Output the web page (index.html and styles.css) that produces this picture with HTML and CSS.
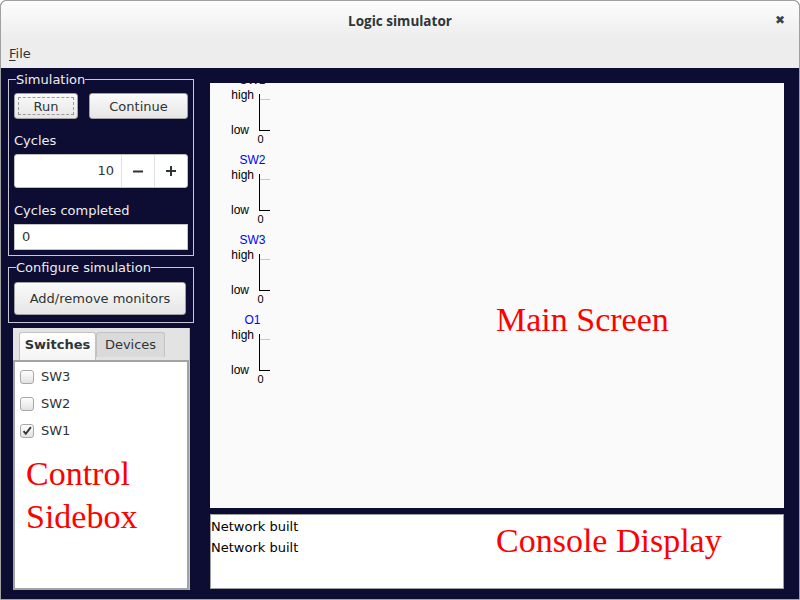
FILE: index.html
```html
<!DOCTYPE html>
<html>
<head>
<meta charset="utf-8">
<title>Logic simulator</title>
<link rel="stylesheet" href="styles.css">
</head>
<body>
<div class="window">
  <header class="head">
    <div class="titlebar">
      <span class="title">Logic simulator</span>
      <span class="close">✖</span>
    </div>
    <div class="menubar"><span class="menu"><u>F</u>ile</span></div>
  </header>
  <main class="body">
    <aside class="side">
      <fieldset class="frame frame-sim">
        <legend>Simulation</legend>
        <div class="btnrow">
          <button class="btn btn-run"><span class="focus">Run</span></button>
          <button class="btn btn-cont">Continue</button>
        </div>
        <div class="lbl">Cycles</div>
        <div class="spin">
          <span class="spin-val">10</span>
          <span class="spin-btn">
            <svg width="12" height="12" viewBox="0 0 12 12"><path d="M1 6.5h10" stroke="#2e3436" stroke-width="2"/></svg>
          </span>
          <span class="spin-btn">
            <svg width="12" height="12" viewBox="0 0 12 12"><path d="M1 6h10M6 1v10" stroke="#2e3436" stroke-width="2"/></svg>
          </span>
        </div>
        <div class="lbl lbl-2">Cycles completed</div>
        <div class="entry">0</div>
      </fieldset>
      <fieldset class="frame frame-cfg">
        <legend>Configure simulation</legend>
        <button class="btn btn-wide">Add/remove monitors</button>
      </fieldset>
      <div class="notebook">
        <div class="tabs">
          <span class="tab tab-active">Switches</span>
          <span class="tab">Devices</span>
        </div>
        <div class="page">
          <label class="check"><span class="box"></span>SW3</label>
          <label class="check"><span class="box"></span>SW2</label>
          <label class="check"><span class="box on"><svg width="14" height="14" viewBox="0 0 14 14"><path d="M3 7.2l2.6 3L11.5 2.5" fill="none" stroke="#2e3436" stroke-width="2.2"/></svg></span>SW1</label>
          <div class="note note-side">Control<br>Sidebox</div>
        </div>
      </div>
    </aside>
    <section class="right">
      <div class="canvas">
        <svg class="plot" width="574" height="425" viewBox="0 0 574 425">
          <g class="trace">
            <text class="name" x="42.5" y="1">SW1</text>
            <text class="axis-t" x="44" y="16">high</text>
            <text class="axis-t" x="39" y="51">low</text>
            <text class="zero" x="50.5" y="60">0</text>
            <path d="M49.5 11V48" stroke="#000"/>
            <path d="M50 16.5H60" stroke="#c8c8c8"/>
            <path d="M49 47.5H60" stroke="#000"/>
          </g>
          <g class="trace" transform="translate(0,80)">
            <text class="name" x="42.5" y="1">SW2</text>
            <text class="axis-t" x="44" y="16">high</text>
            <text class="axis-t" x="39" y="51">low</text>
            <text class="zero" x="50.5" y="60">0</text>
            <path d="M49.5 11V48" stroke="#000"/>
            <path d="M50 16.5H60" stroke="#c8c8c8"/>
            <path d="M49 47.5H60" stroke="#000"/>
          </g>
          <g class="trace" transform="translate(0,160)">
            <text class="name" x="42.5" y="1">SW3</text>
            <text class="axis-t" x="44" y="16">high</text>
            <text class="axis-t" x="39" y="51">low</text>
            <text class="zero" x="50.5" y="60">0</text>
            <path d="M49.5 11V48" stroke="#000"/>
            <path d="M50 16.5H60" stroke="#c8c8c8"/>
            <path d="M49 47.5H60" stroke="#000"/>
          </g>
          <g class="trace" transform="translate(0,240)">
            <text class="name" x="42.5" y="1">O1</text>
            <text class="axis-t" x="44" y="16">high</text>
            <text class="axis-t" x="39" y="51">low</text>
            <text class="zero" x="50.5" y="60">0</text>
            <path d="M49.5 11V48" stroke="#000"/>
            <path d="M50 16.5H60" stroke="#c8c8c8"/>
            <path d="M49 47.5H60" stroke="#000"/>
          </g>
          <text class="note-svg" x="286" y="248">Main Screen</text>
        </svg>
      </div>
      <div class="console">
        <div class="log">
          <div>Network built</div>
          <div>Network built</div>
        </div>
        <div class="note note-console">Console Display</div>
      </div>
    </section>
  </main>
</div>
</body>
</html>
```

FILE: styles.css
```css
* { box-sizing: border-box; }
html, body { margin: 0; padding: 0; }
body {
  width: 800px;
  height: 600px;
  overflow: hidden;
  font-family: "DejaVu Sans", sans-serif;
  font-size: 13px;
  color: #2e3436;
  background: #fff;
}
.window {
  width: 800px;
  height: 600px;
  border: 1px solid #a0a0a0;
  border-radius: 6px 6px 0 0;
  display: flex;
  flex-direction: column;
  overflow: hidden;
  background: #0d0d33;
}
.head {
  height: 67px;
  background: linear-gradient(#fdfdfd, #ededed 55%, #ededed);
  flex: none;
}
.titlebar {
  height: 39px;
  display: flex;
  align-items: center;
  justify-content: center;
  position: relative;
}
.title {
  font-family: "Open Sans", sans-serif;
  font-weight: bold;
  font-size: 13.5px;
  color: #2e3436;
  padding-top: 1px;
}
.close {
  position: absolute;
  right: 14px;
  top: 12px;
  font-size: 12px;
  color: #3c4245;
}
.menubar {
  height: 27px;
  display: flex;
  align-items: center;
  padding-left: 8px;
}
.menu { font-size: 13px; color: #2e3436; padding-bottom: 1px; }
.menu u { text-decoration-thickness: 1px; text-underline-offset: 2px; }

.body {
  flex: 1;
  display: flex;
  padding: 0 15px 0 7px;
  gap: 16px;
}
.side {
  width: 186px;
  flex: none;
  display: flex;
  flex-direction: column;
  padding-top: 4px;
}
.frame {
  margin: 0;
  border: 1px solid #c9c9d6;
  padding: 0 5px 3px 5px;
  min-width: 0;
}
.frame legend {
  padding: 0;
  margin-left: 2px;
  color: #eeeeee;
  font-size: 13px;
  line-height: 15px;
}
.frame-sim { height: 184px; }
.frame-cfg { margin-top: 4px; height: 63px; padding-top: 0; }

.btnrow {
  display: flex;
  justify-content: space-between;
  margin-top: 6px;
}
.btn {
  font-family: "DejaVu Sans", sans-serif;
  font-size: 13px;
  color: #2e3436;
  height: 26px;
  border: 1px solid #a1a1a1;
  border-radius: 3px;
  background: linear-gradient(#fafafa, #e6e6e6);
  box-shadow: inset 0 1px #fff, 0 1px rgba(0,0,0,0.15);
  padding: 0;
  margin: 0;
}
.btn-run { width: 64px; display: flex; padding: 3px; }
.btn-run .focus {
  flex: 1;
  border: 1px dashed #9a9a9a;
  display: flex;
  align-items: center;
  justify-content: center;
}
.btn-cont { width: 99px; }
.btn-wide { width: 172px; height: 33px; margin-top: 7px; }

.lbl {
  color: #eeeeee;
  height: 35px;
  line-height: 44px;
}
.lbl-2 { height: 36px; line-height: 46px; }
.spin {
  height: 34px;
  display: flex;
  background: #fff;
  border: 1px solid #bfbfbf;
  border-radius: 3px;
  box-shadow: 0 1px rgba(0,0,0,0.2);
}
.spin-val {
  flex: 1;
  text-align: right;
  padding-right: 7px;
  line-height: 32px;
  color: #2e3436;
}
.spin-btn {
  width: 33px;
  border-left: 1px solid #e0e0e0;
  display: flex;
  align-items: center;
  justify-content: center;
}
.entry {
  height: 26px;
  background: #fff;
  border: 1px solid #c4c4c4;
  line-height: 24px;
  padding-left: 7px;
  color: #2e3436;
}

.notebook {
  margin-top: 5px;
  margin-left: 5px;
  margin-right: 4px;
  height: 262px;
  background: #e3e3e3;
  display: flex;
  flex-direction: column;
  border-right: 1px solid #c0c0c0;
}
.tabs {
  display: flex;
  padding: 4px 0 0 6px;
  height: 32px;
}
.tab {
  height: 25px;
  line-height: 24px;
  width: 69px;
  text-align: center;
  border: 1px solid #c3c3c3;
  border-bottom: none;
  border-radius: 3px 3px 0 0;
  background: #dadada;
  color: #2e3436;
}
.tab-active {
  width: 77px;
  background: linear-gradient(#ffffff, #f4f4f4);
  font-weight: bold;
  height: 28px;
}
.page {
  flex: 1;
  background: #fff;
  border: 2px solid #a3a3a3;
  padding: 1px 0 0 5px;
}
.check {
  display: flex;
  align-items: center;
  height: 27px;
  color: #2e3436;
  gap: 7px;
}
.box {
  width: 14px;
  height: 14px;
  border: 1px solid #a8a8a8;
  border-radius: 3px;
  background: linear-gradient(#fdfdfd, #e2e2e2);
  display: flex;
  align-items: center;
  justify-content: center;
}
.note {
  font-family: "Liberation Serif", serif;
  color: #ff0000;
  font-size: 34px;
}
.note-side {
  line-height: 43px;
  margin-top: 8px;
  margin-left: 6px;
}

.right {
  flex: 1;
  display: flex;
  flex-direction: column;
  padding-top: 15px;
}
.canvas {
  height: 425px;
  background: #fafafa;
  overflow: hidden;
}
.plot { display: block; }
.plot text { font-family: "Liberation Sans", sans-serif; font-size: 12px; }
.plot .name { fill: #0000ff; text-anchor: middle; }
.plot .axis-t { fill: #000; text-anchor: end; }
.plot .zero { fill: #000; text-anchor: middle; font-size: 11px; }
.plot .note-svg {
  font-family: "Liberation Serif", serif;
  font-size: 34px;
  fill: #ff0000;
}
.console {
  margin-top: 6px;
  height: 75px;
  background: #fff;
  border: 1px solid #a0a0a0;
  display: flex;
  padding: 1px 0 0 0;
}
.log {
  width: 285px;
  line-height: 21px;
  color: #000;
}
.note-console {
  line-height: 52px;
  margin-top: -1px;
}
```
